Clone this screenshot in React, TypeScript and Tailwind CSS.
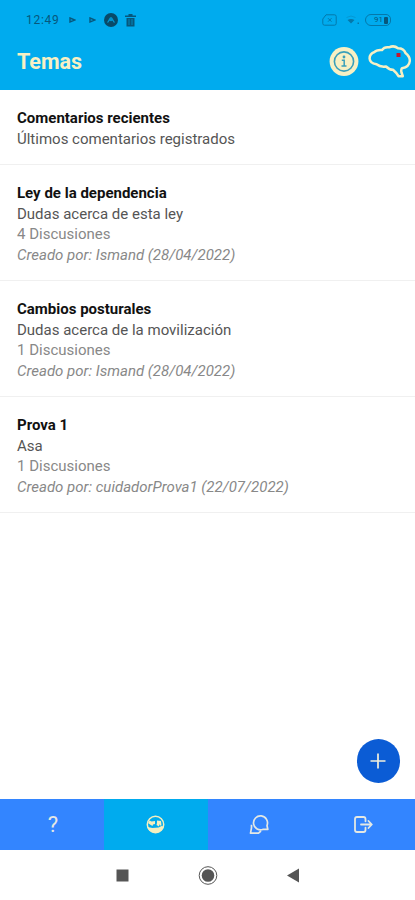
type Tema = {
  titulo: string;
  descripcion: string;
  discusiones?: string;
  creado?: string;
};

const temas: Tema[] = [
  {
    titulo: "Comentarios recientes",
    descripcion: "Últimos comentarios registrados",
  },
  {
    titulo: "Ley de la dependencia",
    descripcion: "Dudas acerca de esta ley",
    discusiones: "4 Discusiones",
    creado: "Creado por: Ismand (28/04/2022)",
  },
  {
    titulo: "Cambios posturales",
    descripcion: "Dudas acerca de la movilización",
    discusiones: "1 Discusiones",
    creado: "Creado por: Ismand (28/04/2022)",
  },
  {
    titulo: "Prova 1",
    descripcion: "Asa",
    discusiones: "1 Discusiones",
    creado: "Creado por: cuidadorProva1 (22/07/2022)",
  },
];

function StatusBar() {
  return (
    <div className="flex h-[38px] items-center pt-0.5 pr-[24px] pl-[26px] text-[#07577c]">
      <span className="w-[34px] text-[12px] tracking-[0.7px]">12:49</span>
      <svg className="ml-[9px]" width="7" height="6" viewBox="0 0 7 6" fill="none" stroke="currentColor" strokeWidth="1.4">
        <path d="M1 1l5 2-5 2z" />
      </svg>
      <svg className="ml-[13px]" width="7" height="6" viewBox="0 0 7 6" fill="none" stroke="currentColor" strokeWidth="1.4">
        <path d="M1 1l5 2-5 2z" />
      </svg>
      <svg className="ml-[8px]" width="14" height="14" viewBox="0 0 14 14">
        <circle cx="7" cy="7" r="7" fill="#084a69" />
        <path d="M3.500 9.500c1.500-1 2-5 3.500-5s2 4 3.500 5M6 8l1-2 1 2" fill="none" stroke="#0098d4" strokeWidth="1.200" />
      </svg>
      <svg className="ml-[7px]" width="11" height="13" viewBox="0 0 11 13">
        <path d="M0 1.500h3.500V0h4v1.500H11V3H0zM1.500 4h8v8.500h-8z" fill="currentColor" />
        <path d="M4 5v6M7 5v6" stroke="#0386bb" />
      </svg>
      <svg className="ml-auto" width="15" height="12" viewBox="0 0 15 12" fill="none" stroke="#0478aa">
        <path d="M4 .8h8.500q1.700 0 1.700 1.700v7q0 1.700-1.700 1.700h-10Q.8 11.200.8 9.500V5z" />
        <path d="M6 4.200l3.500 3.500M9.500 4.200l-3.500 3.500" />
      </svg>
      <svg className="ml-[9px]" width="14" height="12" viewBox="0 0 14 12">
        <path d="M.500 3.500q4.500-3 9 0" fill="none" stroke="#0498d4" />
        <path d="M1.500 6q3.500-2 7 0L5 9.500z" fill="#0478aa" />
        <path d="M11.500 8.500h1.500V10h-1.500z" fill="#0478aa" />
      </svg>
      <div className="ml-[5px] flex h-3 w-[26px] items-center justify-end gap-px rounded-l-[6px] rounded-r-[5px] border border-[#0478aa] pr-0.5 text-[8px] leading-none text-[#07577c]">
        <span>91</span>
        <span className="h-[7px] w-[4px] rounded-[1px] bg-[#07577c]" />
      </div>
    </div>
  );
}

function InfoIcon() {
  return (
    <svg width="30" height="30" viewBox="0 0 30 30">
      <circle cx="15" cy="14.500" r="14.400" fill="#f7f0c4" />
      <circle cx="15" cy="14.500" r="9.600" fill="none" stroke="#3a9fba" strokeWidth="1.600" />
      <circle cx="15" cy="10" r="1.400" fill="#3a9fba" />
      <path d="M12.800 13.200h2.400v5.500M12.500 19h5" fill="none" stroke="#3a9fba" strokeWidth="1.500" />
    </svg>
  );
}

function BrainIcon() {
  return (
    <svg width="44" height="34" viewBox="0 0 44 34">
      <path
        d="M6.500 7C8 5 11 4.800 14 5C15.500 2.800 18 1.800 21 2.300C24 1 27.500 1.200 30 3.200C33.500 3.200 36.500 5 37.500 8C40 10 42 13 41.800 16C41.500 19.500 39 22.500 34 23.200C32.800 24.500 33.200 26 33.500 27.500L34.800 31.200H30.500C29 28.500 27 26.500 25 24.800C22.500 24.800 20 23.500 18 21.500C14.500 22 11 21.300 8.500 19.300C4.500 18.500 1.700 16.500 1.600 13.500C1.600 10.500 3.500 8 6.500 7Z"
        fill="none"
        stroke="#f7f0c4"
        strokeWidth="2.500"
        strokeLinejoin="round"
      />
      <path d="M28.500 8h4v4h-4z" fill="#c5162d" />
    </svg>
  );
}

function GlobeIcon() {
  return (
    <svg width="19" height="19" viewBox="0 0 19 19">
      <circle cx="9.500" cy="9.500" r="8.200" fill="#00abee" stroke="#f5efbf" strokeWidth="1.500" />
      <path
        d="M3.500 5.500l2 1 3.500-.5v3l-2 .5-.5 1.500-2.500-1.500L2 8zM11 5.500l4 .5.500 4.500h-1.500l-.5-1.500-.5 2.500-2.500-1.500.500-2zM1.500 12l5 1 6-.500 3-1.500 2 .5c-1 4-4 6.200-8 6.200s-7-2-8-5.700z"
        fill="#f5efbf"
      />
    </svg>
  );
}

function ChatIcon() {
  return (
    <svg width="21" height="21" viewBox="0 0 21 21" fill="none" stroke="currentColor" strokeWidth="1.700" strokeLinejoin="round">
      <path d="M18.800 15.300h-4.500A7 7 0 1 1 18 11.500z" />
      <path d="M2.500 10.800v3L1.500 19.200h8l2.500-2.200" />
    </svg>
  );
}

function ExitIcon() {
  return (
    <svg width="19" height="17" viewBox="0 0 19 17" fill="none" stroke="currentColor" strokeWidth="1.800" strokeLinecap="round" strokeLinejoin="round">
      <path d="M11.500 5.300V3q0-2-2-2H3Q1 1 1 3v11q0 2 2 2h6.500q2 0 2-2v-2.300M14.500 5l3.300 3.500-3.300 3.500M7 8.500h10.500" />
    </svg>
  );
}

export default function App() {
  return (
    <div className="flex h-[900px] w-[415px] flex-col bg-white font-['Roboto',sans-serif]">
      <header className="h-[90px] bg-[#00abee]">
        <StatusBar />
        <div className="flex h-12 items-center pl-[17px]">
          <h1 className="pt-px text-[21.500px] font-bold text-[#f7f0c4]">Temas</h1>
          <div className="mr-[3px] ml-auto flex items-center gap-[9px]">
            <InfoIcon />
            <BrainIcon />
          </div>
        </div>
      </header>

      <main className="flex flex-1 flex-col">
        {temas.map((tema) => (
          <div
            key={tema.titulo}
            className="border-b border-[#f0f0f0] pt-[18px] pb-[15px] pl-[17px] text-[15px] leading-[20.5px]"
          >
            <h2 className="font-bold text-[#111]">{tema.titulo}</h2>
            <p className="text-[#555]">{tema.descripcion}</p>
            {tema.discusiones && <p className="text-[#888]">{tema.discusiones}</p>}
            {tema.creado && <p className="text-[#888] italic">{tema.creado}</p>}
          </div>
        ))}

        <button
          aria-label="Crear tema"
          className="mt-auto mr-[15px] mb-4 flex h-[44px] w-[43px] items-center justify-center self-end rounded-full bg-[#0b5cd5] pr-0.5"
        >
          <svg width="16" height="16" viewBox="0 0 16 16" stroke="#f2efdb" strokeWidth="1.700">
            <path d="M8 .5v15M.5 8h15" />
          </svg>
        </button>
      </main>

      <nav className="grid h-[51px] grid-cols-4 bg-[#3385ff] text-[#e4e8e4]">
        <button className="flex items-center justify-center pl-0.5 text-[22px]">?</button>
        <button aria-label="Temas" className="flex items-center justify-center bg-[#00abee]">
          <GlobeIcon />
        </button>
        <button aria-label="Mensajes" className="flex items-center justify-center">
          <ChatIcon />
        </button>
        <button aria-label="Salir" className="flex items-center justify-center">
          <ExitIcon />
        </button>
      </nav>

      <div className="flex h-[50px] items-center justify-center bg-white">
        <svg width="186" height="20" viewBox="0 0 186 20" fill="#555">
          <path d="M1.500 4.500h12v12h-12z" />
          <circle cx="93" cy="10.500" r="6.300" />
          <circle cx="93" cy="10.500" r="8.800" fill="none" stroke="#555" />
          <path d="M172 10.500l12-7v14z" />
        </svg>
      </div>
    </div>
  );
}
